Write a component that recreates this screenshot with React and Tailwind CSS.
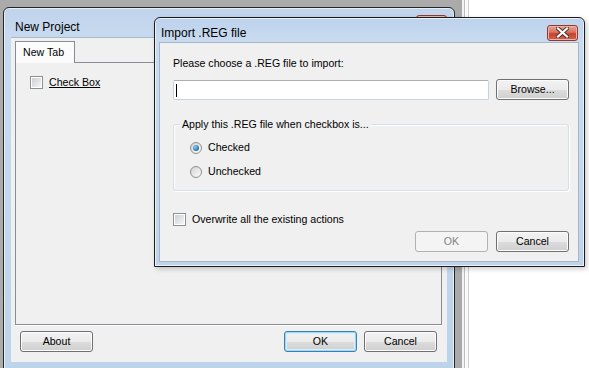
import React from "react";

const font = "font-['Liberation_Sans',Arial,sans-serif]";

const Button = ({ children, variant = "normal", className = "" }) => {
  let look =
    "border-[#707070] bg-[linear-gradient(#f2f2f2_0%,#ebebeb_50%,#dddddd_50%,#cfcfcf_100%)] shadow-[inset_0_0_0_1px_#fcfcfc] text-black";
  if (variant === "focused") {
    look =
      "border-[#3c7fb1] bg-[linear-gradient(#f2f2f2_0%,#ebebeb_50%,#dddddd_50%,#cfcfcf_100%)] shadow-[inset_0_0_0_1px_#9fd8f6,inset_0_0_0_2px_#d8f0fb] text-black";
  }
  if (variant === "disabled") {
    look = "border-[#adb2b5] bg-[#f4f4f4] text-[#838383]";
  }
  return (
    <div
      className={`flex items-center justify-center h-[21px] w-[73px] rounded-[3px] border text-[10.6px] leading-none ${look} ${className}`}
    >
      {children}
    </div>
  );
};

const CheckBox = () => (
  <span className="flex items-center justify-center w-[13px] h-[13px] border border-[#8e8f8f] bg-white shrink-0">
    <span className="w-[9px] h-[9px] bg-[linear-gradient(135deg,#cbcfd5,#f6f6f6)]" />
  </span>
);

const Radio = ({ checked }) => (
  <span className="flex items-center justify-center w-[12px] h-[12px] rounded-full border border-[#8e8f8f] bg-[linear-gradient(135deg,#d4d4d4,#fbfbfb)] shrink-0">
    {checked && (
      <span className="w-[6px] h-[6px] rounded-full bg-[radial-gradient(circle_at_35%_35%,#8ad0f5,#2a6fa8_70%,#1c4f7a)]" />
    )}
  </span>
);

const CloseButton = ({ className = "" }) => (
  <div
    className={`flex items-center justify-center w-[31px] h-[16px] rounded-[3px] border border-[#8c3a32] bg-[linear-gradient(#e8a394_0%,#d9725f_45%,#c4432d_55%,#d0634f_100%)] shadow-[inset_0_0_0_1px_#eeb3a8] ${className}`}
  >
    <svg width="13" height="11" viewBox="0 0 13 11">
      <path
        d="M2 1.5 L11 9.5 M11 1.5 L2 9.5"
        stroke="#5a2a24"
        strokeWidth="4"
        strokeLinecap="square"
      />
      <path
        d="M2 1.5 L11 9.5 M11 1.5 L2 9.5"
        stroke="#ffffff"
        strokeWidth="2.2"
        strokeLinecap="square"
      />
    </svg>
  </div>
);

const NewProjectWindow = () => (
  <div className="absolute left-[3px] top-[7px] w-[452px] h-[372px] border border-[#262626] rounded-t-[6px] bg-[linear-gradient(#bfd3eb,#c8daef_30px,#bdd3ea)] shadow-[inset_0_0_0_1px_#e6eef8] flex flex-col">
    <div className="h-[29px] flex items-start justify-between pl-[11px] pr-[7px] shrink-0">
      <span className="text-[12px] text-black mt-[10px]">New Project</span>
      <CloseButton className="mt-[7px]" />
    </div>
    <div className="mx-[7px] h-[325px] bg-[#f0f0f0] border-t border-[#a8b9cc] flex flex-col px-[4px]">
      <div className="mt-[3px] flex">
        <div className="relative z-10 h-[22px] w-[60px] bg-[#fbfbfb] border border-b-0 border-[#898c95] flex items-center pl-[7px] text-[10.6px]">
          New Tab
        </div>
      </div>
      <div className="-mt-px h-[263px] w-[427px] border border-[#898c95] bg-[#f0f0f0] shadow-[0_1px_0_#ffffff] px-[14px] pt-[13px]">
        <div className="flex items-center gap-[6px]">
          <CheckBox />
          <span className="text-[10.6px] underline leading-[13px]">Check Box</span>
        </div>
      </div>
      <div className="mt-[6px] flex items-center pl-[5px] pr-[6px]">
        <Button>About</Button>
        <div className="flex-1" />
        <Button variant="focused">OK</Button>
        <Button className="ml-[7px]">Cancel</Button>
      </div>
    </div>
  </div>
);

const ImportDialog = () => (
  <div className="absolute left-[154px] top-[17px] w-[431px] h-[250px] border border-[#1c1c1c] rounded-t-[6px] bg-[linear-gradient(#bcd2ec,#c9dbf0_24px,#bfd4eb)] shadow-[inset_0_0_0_1px_#e8f0f9,2px_2px_5px_rgba(0,0,0,0.2)] flex flex-col">
    <div className="h-[24px] flex items-center justify-between pl-[6px] pr-[6px] shrink-0">
      <span className="text-[12px] text-black mt-[6px]">Import .REG file</span>
      <CloseButton className="mt-[5px]" />
    </div>
    <div className="ml-[4px] mr-[5px] h-[220px] bg-[#f0f0f0] border border-[#a6b6c8] flex flex-col pl-[13px] pr-[9px] text-[10.6px]">
      <div className="mt-[13px] h-[14px] leading-[14px]">
        Please choose a .REG file to import:
      </div>
      <div className="mt-[9px] flex items-center gap-[7px]">
        <div className="relative h-[20px] w-[316px] bg-white border border-[#c9d3dd] border-t-[#abadb3] rounded-[2px]">
          <span className="absolute left-[2px] top-[3px] w-px h-[13px] bg-black" />
        </div>
        <Button>Browse...</Button>
      </div>
      <div className="relative mt-[24px] h-[67px] w-[396px] border border-[#d5dfe5] rounded-[3px] shadow-[inset_1px_1px_0_#ffffff,1px_1px_0_#ffffff]">
        <span className="absolute left-[6px] -top-[8px] px-[2px] bg-[#f0f0f0] leading-[14px]">
          Apply this .REG file when checkbox is...
        </span>
        <div className="pl-[16px] pt-[17px] flex flex-col gap-[12px]">
          <div className="flex items-center gap-[6px] h-[12px]">
            <Radio checked />
            <span>Checked</span>
          </div>
          <div className="flex items-center gap-[6px] h-[12px]">
            <Radio />
            <span>Unchecked</span>
          </div>
        </div>
      </div>
      <div className="mt-[22px] flex items-center gap-[6px] h-[13px]">
        <CheckBox />
        <span>Overwrite all the existing actions</span>
      </div>
      <div className="mt-[5px] flex justify-end gap-[8px] w-[396px]">
        <Button variant="disabled">OK</Button>
        <Button>Cancel</Button>
      </div>
    </div>
  </div>
);

export default function App() {
  return (
    <div className={`relative w-[589px] h-[368px] overflow-hidden flex bg-white text-black ${font}`}>
      <div className="w-[457px] bg-[#ababab]" />
      <div className="w-[5px] bg-[#a9a9a9]" />
      <div className="w-[2px] bg-[#f3f3f3]" />
      <div className="w-px bg-[#bdbdbd]" />
      <div className="w-[3px] bg-[#fbfbfb]" />
      <div className="w-px bg-[#cfcfcf]" />
      <div className="flex-1 bg-white" />
      <NewProjectWindow />
      <ImportDialog />
    </div>
  );
}
